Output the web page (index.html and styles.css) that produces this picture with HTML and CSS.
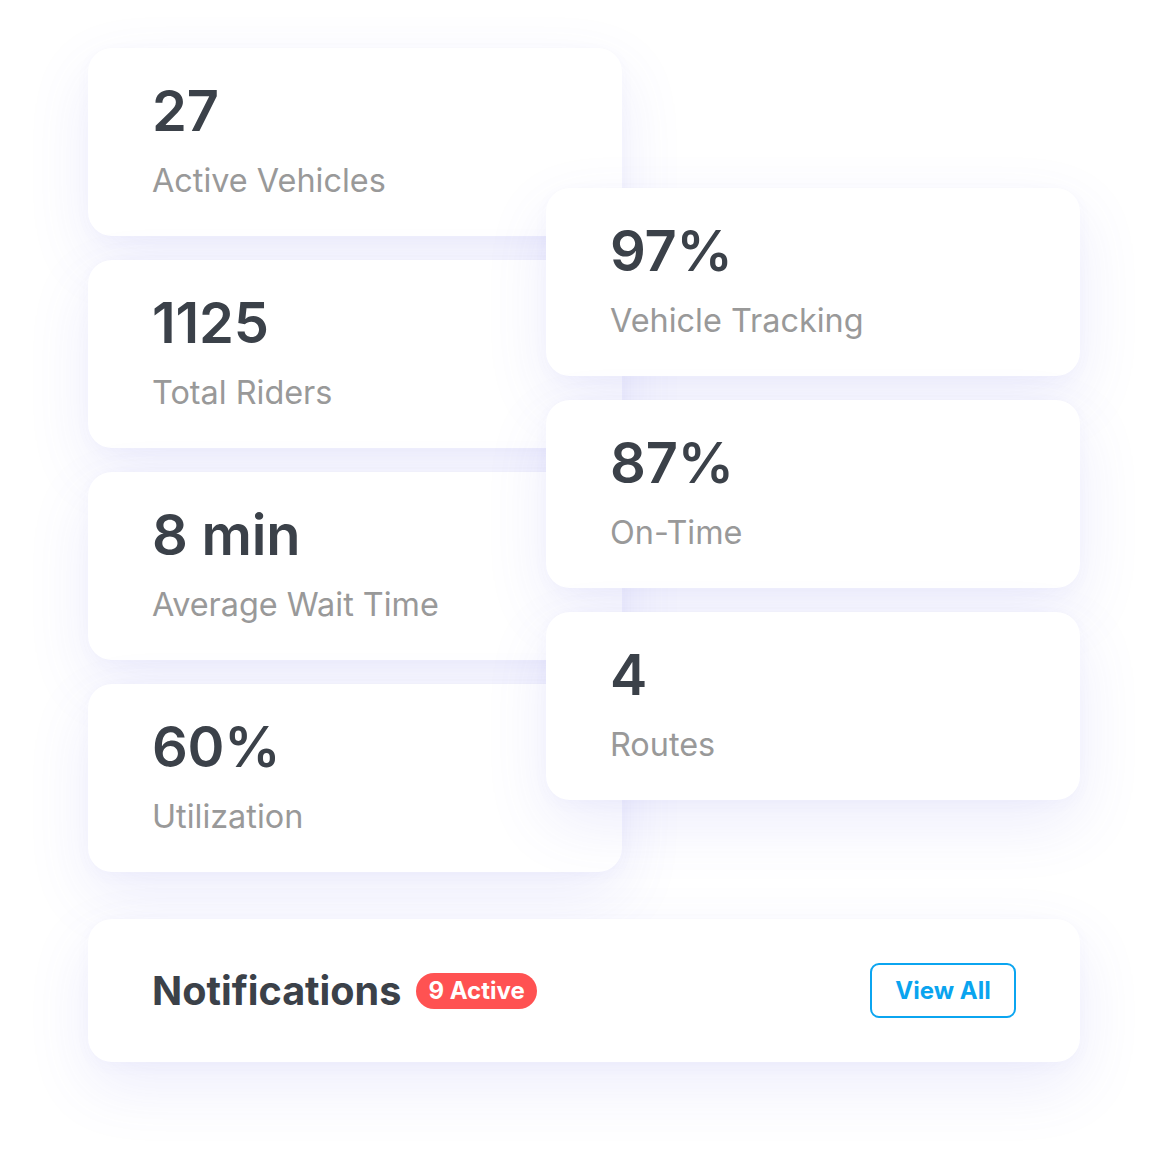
FILE: index.html
```html
<!DOCTYPE html>
<html lang="en">
<head>
<meta charset="utf-8">
<title>Transit Stats</title>
<link rel="stylesheet" href="styles.css">
</head>
<body>
<main class="board">
  <section class="stats">
    <div class="col col-left">
      <div class="card"><div class="num">27</div><div class="label">Active Vehicles</div></div>
      <div class="card"><div class="num">1125</div><div class="label">Total Riders</div></div>
      <div class="card"><div class="num">8 min</div><div class="label">Average Wait Time</div></div>
      <div class="card"><div class="num">60%</div><div class="label">Utilization</div></div>
    </div>
    <div class="col col-right">
      <div class="card"><div class="num">97%</div><div class="label">Vehicle Tracking</div></div>
      <div class="card"><div class="num">87%</div><div class="label">On-Time</div></div>
      <div class="card"><div class="num">4</div><div class="label">Routes</div></div>
    </div>
  </section>
  <section class="notif">
    <div class="notif-title">
      <h2>Notifications</h2>
      <span class="badge">9 Active</span>
    </div>
    <button class="btn">View All</button>
  </section>
</main>
</body>
</html>
```
FILE: styles.css
```css
* { box-sizing: border-box; }
html, body { margin: 0; padding: 0; background: #ffffff; }
body {
  font-family: Inter, "Noto Sans", "Liberation Sans", sans-serif;
  color: #3b4149;
  min-height: 1160px;
  padding-top: 48px;
}
.board {
  width: 992px;
  margin: 0 auto;
  display: flex;
  flex-direction: column;
  gap: 47px;
}
.stats {
  display: flex;
  align-items: flex-start;
}
.col {
  width: 534px;
  display: flex;
  flex-direction: column;
  gap: 24px;
  flex-shrink: 0;
}
.col-right {
  margin-left: -76px;
  margin-top: 140px;
}
.card {
  background: #ffffff;
  border-radius: 24px;
  height: 188px;
  padding: 29px 64px 0;
  box-shadow: 0 24px 64px rgba(88, 88, 225, 0.11), 0 4px 16px rgba(88, 88, 225, 0.03);
}
.num {
  font-size: 56px;
  line-height: 68px;
  font-weight: 600;
  color: #3b4149;
  letter-spacing: -0.2px;
}
.label {
  margin-top: 17px;
  font-size: 32.4px;
  line-height: 38px;
  font-weight: 400;
  color: #999999;
}
.notif {
  background: #ffffff;
  border-radius: 24px;
  height: 143px;
  padding: 0 64px;
  display: flex;
  align-items: center;
  justify-content: space-between;
  box-shadow: 0 24px 64px rgba(88, 88, 225, 0.11), 0 4px 16px rgba(88, 88, 225, 0.03);
}
.notif-title {
  display: flex;
  align-items: center;
  gap: 15px;
}
.notif-title h2 {
  margin: 0;
  font-size: 39.6px;
  line-height: 48px;
  font-weight: 700;
  color: #3b4149;
}
.badge {
  display: inline-flex;
  align-items: center;
  height: 36px;
  padding: 0 12px;
  border-radius: 18px;
  background: #ff5252;
  color: #ffffff;
  font-size: 24px;
  font-weight: 700;
}
.btn {
  font-family: inherit;
  width: 146px;
  height: 55px;
  border: 2px solid #0ba5f0;
  border-radius: 9px;
  background: #ffffff;
  color: #0aa4ef;
  font-size: 24px;
  font-weight: 700;
  padding: 0;
}
```
